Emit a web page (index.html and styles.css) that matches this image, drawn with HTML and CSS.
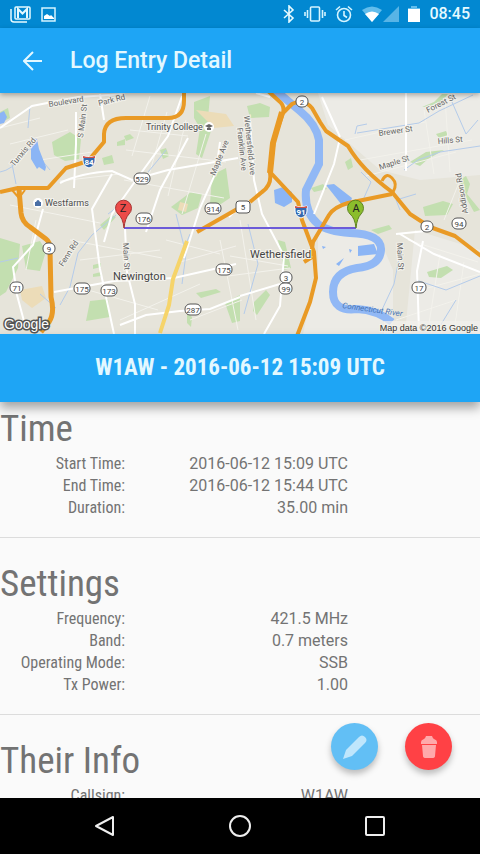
FILE: index.html
```html
<!DOCTYPE html>
<html lang="en">
<head>
  <meta charset="UTF-8" />
  <meta name="viewport" content="width=device-width, initial-scale=1" />
  <title>Log Entry Detail</title>
  <link rel="stylesheet" href="styles.css">
</head>
<body>

  <!-- System status bar -->
  <div class="status-bar">
    <div class="status-group">
      <svg width="22" height="18" viewBox="0 0 22 18" fill="none" stroke="#e6faff">
        <path d="M1 4v10q0 3 3 3h13" stroke-width="1.5"/>
        <rect x="5" y="2" width="15" height="12" rx="1" stroke-width="1.500"/>
        <path d="M8 13V4l4.500 4.500L17 4v9" stroke-width="2"/>
      </svg>
      <svg width="15" height="15" viewBox="0 0 15 15">
        <rect x="1" y="1" width="13" height="13" fill="none" stroke="#d5f4ff" stroke-width="1.500"/>
        <path d="M3 12V9l3-2 3 2 1-1 3 3v1z" fill="#fff"/>
      </svg>
    </div>
    <div class="status-group status-right">
      <svg width="12" height="18" viewBox="0 0 12 18" fill="none" stroke="#e6faff" stroke-width="1.600">
        <path d="M1 5l9 8-4 4V1l4 4-9 8"/>
      </svg>
      <svg width="22" height="18" viewBox="0 0 22 18" fill="none" stroke="#d5f4ff" stroke-width="1.600">
        <rect x="6.500" y="2" width="9" height="14" rx="1"/>
        <path d="M3.500 5v8M1 7v4M18.500 5v8M21 7v4"/>
      </svg>
      <svg width="18" height="18" viewBox="0 0 18 18" fill="none" stroke="#d5f4ff" stroke-width="1.600">
        <circle cx="9" cy="10" r="6.500"/>
        <path d="M1 5l4-3.500M17 5l-4-3.500M9 6v4.500l3 2"/>
      </svg>
      <svg class="wifi" width="20" height="16" viewBox="0 0 20 16">
        <path d="M0 4q10-7 20 0L10 16z" fill="#62bdec"/>
        <path d="M3 8q7-5 14 0l-7 8z" fill="#fff"/>
      </svg>
      <svg width="16" height="16" viewBox="0 0 16 16"><path d="M16 0v16H0z" fill="#58b4e6"/></svg>
      <svg class="battery" width="12" height="18" viewBox="0 0 12 18">
        <path d="M0 3h3V1h6v2h3v14H0z" fill="#62bdec"/>
        <path d="M0 4h12v13H0z" fill="#fff"/>
      </svg>
      <span class="clock">08:45</span>
    </div>
  </div>

  <header class="app-bar">
    <button type="button" class="back-button" aria-label="Back">
      <svg width="20" height="20" viewBox="0 0 20 20" fill="none" stroke="#e3f8ff" stroke-width="2">
        <path d="M19 10H2M10 1l-9 9 9 9"/>
      </svg>
    </button>
    <h1>Log Entry Detail</h1>
  </header>

  <main>
    <div class="map">
      <svg viewBox="0 93 480 241" role="img" aria-label="Map of both stations">
        <rect x="0" y="93" width="480" height="241" fill="#e6e4da"/>

        <!-- Open land -->
        <g fill="#ecebe6">
          <path d="M318 93h162v82l-60 5-40-10-52-45z"/>
          <path d="M318 225l60 10 15 35v64h-90l15-70z"/>
          <path d="M415 230l65 20v84h-75z"/>
        </g>

        <!-- Parks -->
        <g fill="#c3dfb0">
          <path d="M52 142l18-10 11 7-2 20-14 2-11-6z"/>
          <path d="M102 158l10-3 2 8-10 2zM117 142l8-3v6l-8 1zM124 136l6-2 4 4-8 3z"/>
          <path d="M194 102l16-6-2 22 4 10-10 30-6-4 4-26-6-10z"/>
          <path d="M212 175l14-7 4 30-12 8-8-2z"/>
          <path d="M171 207l20-15 11 2-4 14-16 7z"/>
          <path d="M0 238l20 6-2 24-12 24-6 4z"/>
          <path d="M22 246l18-5 6 10-6 20-14-2z"/>
          <path d="M90 301l18-2 2 18-24 4zM93 265l8-2v4l-8 2zM93 274l8-2v4l-8 1z"/>
          <path d="M247 106l13-3 10 4-1 10-19 1z"/>
          <path d="M311 188l12-4 4 5-13 3zM345 162l6-4 2 9-5 3z"/>
          <path d="M410 162l16-10 18-2-16 9-8 7z"/>
          <path d="M423 207l20-6 10 3-6 11-22 1zM460 180l6-4 4 8-3 10 13 16-6 2-12-22z"/>
          <path d="M427 272l20-6 6 4-12 8-12-1z"/>
          <path d="M254 302l12-12 4 5-13 20-4-4zM278 240l7 2 6 26-7 2zM371 230l18-5 3 4-14 5z"/>
          <path d="M225 303l15-8v26l-8 2zM196 293l20-4 5 3-20 6zM160 150l6-2 3 8-6 3z"/>
          <path d="M422 107l12-5 8-8h6l-10 12zM436 134l10-3 2 4-9 3zM187 313l5 4-1 10-4-4z"/>
          <path d="M100 225l12-10 4 2-12 13zM0 112l8-4 2 10-8 4z"/>
        </g>
        <path d="M20 290l22-4 4 12-14 10-10-8zM196 110l30 4 8 12-20 2zM180 202l8 2-2 8-8-2z" fill="#ecdcb8"/>

        <!-- Side streets -->
        <g fill="none" stroke="#f3f2ec" stroke-width="1">
          <path d="M0 128l40-10M10 144l58-14M40 160l52-8M60 181l60-7M130 130l58 6M126 150l100 12M150 96l-18 60M167 112l-20 70M186 120l-18 76M206 134l-24 80M124 180l100 18M10 205l90 18M36 220l-10 50M70 240l92 18M80 260l80-10M88 290l70 20M120 320l80-36M166 240l54 14M180 262l56-16M190 320l52-20M220 240l18 90M240 220l16 100M230 256l58 10M228 276l62-8M345 140l80-18M360 160l112-20M366 176l90-24M424 110l10 64M445 98l5 74M460 180l-16 40M408 240l70 22M420 290l60-16M396 320l60-20M440 254l-12 76M464 262l-10 70"/>
        </g>

        <!-- Creeks -->
        <g fill="none" stroke="#b4cbea" stroke-width="1">
          <path d="M0 172q12-2 22-16l12-10M28 128l2-22M16 184l-4-20M40 158l10 12M116 215l-24 20-14 18-8 34-10 18M176 214l10 40-4 30M108 214l16-12M355 134l2-8 10-2M357 133l62-10 20-12 34-16M400 210l-4-10 20-6M363 200l8-18-10-10M418 160l22-8 40-6M452 102l14 32 12-14M248 224l10 40-14 50M402 244l-8 40-14 30M416 280l30 10 34-14M456 300l-16 26M148 172l10-12 8-10M404 170l14-10M0 262l18-4M40 294l16 14M190 234l-8 20"/>
        </g>

        <!-- Water -->
        <g fill="#8bb5f5">
          <path d="M0 113l4-2 3 6-3 6-4 1zM31 138l6 1 2 10 7 18-1 4-6-4-2 2-6-10z"/>
          <path d="M274 190l9-3 9 5v10l-8 5-9-4zM326 185l8-1 18 14-3 8-8-2z"/>
          <path d="M358 246l16-2 4 10-20 2zM349 249l3 1-2 3zM336 264l8-6-5 8zM322 246l4 1-3 2z"/>
        </g>
        <path d="M275 90L300 111Q316 124 319 140V164L306 190Q304 212 318 224 328 232 350 233 382 234 381 250T357 268Q333 272 333 292T357 309Q377 310 392 322" fill="none" stroke="#91b8f5" stroke-width="8"/>

        <!-- Main streets -->
        <g fill="none" stroke="#fff" stroke-width="2">
          <path d="M0 128l32-22 46-9 46-3M76 112v32l-2 44M60 183q20-10 52-12l20 9 36-10 70-12M112 174l-20 35 8 60 14 65M182 96l-14 40-32 44-24 34-8 28M188 138L160 190l-14 42M220 142l-4 30-16 36-16 50M43 209l-10 36-20 22 4 28 8 30M125 228l2 44 8 32v30M54 292l60-11 60-3 62-14M120 325l26-10 34-4 30-2 30-12"/>
          <path d="M256 93l14 4M250 120l4 60 8 34 22 42-4 50-16 28M322 97l18 40M406 93v78M340 138l-6 26-20 50M400 234l34 20 46 18M423 241l-6 30 2 60M396 234l30-3M229 217l14-14M240 296l40-12M100 94l4 26"/>
        </g>
        <path d="M187 241l-14 38-4 26-9 28" fill="none" stroke="#f6d46a" stroke-width="4"/>

        <!-- Highways -->
        <g fill="none" stroke="#e99a25" stroke-width="4" stroke-linejoin="round">
          <path d="M184 93v8q0 17-16 17h-42q-21 0-22 16v8l-16 19-22 7-18 20H18l-18 4"/>
          <path d="M19 189l2 24q1 9 9 14l16 12q4 3 4 10l1 48q4 16-2 25l-8 10" stroke-width="5"/>
          <path d="M12 190l7 8 6-8" stroke-width="2"/>
          <path d="M268 91l11 10q6 5 4 12l-9 26-4 34q2 12-8 19l-12 10M283 113l9-9q11-6 20 4l8 14 6 9 22 15q14 24 44 46l18 22 20 13 25 9 26 20" stroke-width="4"/>
          <path d="M282 112l-9 31-3 30" stroke-width="6"/>
          <path d="M270 172l28 30 4 18 12 32 2 26-6 24-13 34M392 194l-44 9q-14 4-19 12l-16 27-2 14M304 262l8-5"/>
          <path d="M393 192q5-8-1-14t-10 3" stroke-width="3"/>
          <path d="M197 232l42-24"/>
        </g>

        <path d="M124 228h232" stroke="#6c5bd8" stroke-width="2"/>

        <!-- Road signs -->
        <g fill="#fff" stroke="#555" stroke-width="1">
          <rect x="134" y="173" width="16" height="11" rx="5"/>
          <rect x="205" y="203" width="16" height="11" rx="5"/>
          <rect x="136" y="213" width="16" height="11" rx="5"/>
          <rect x="236" y="201" width="14" height="12" rx="3"/>
          <rect x="43" y="243" width="12" height="11" rx="5"/>
          <rect x="10" y="282" width="13" height="11" rx="5"/>
          <rect x="74" y="283" width="16" height="11" rx="5"/>
          <rect x="101" y="285" width="16" height="11" rx="5"/>
          <rect x="216" y="264" width="16" height="11" rx="5"/>
          <rect x="185" y="304" width="16" height="11" rx="5"/>
          <rect x="296" y="96" width="12" height="11" rx="5"/>
          <rect x="421" y="221" width="12" height="11" rx="5"/>
          <rect x="452" y="218" width="14" height="11" rx="5"/>
          <rect x="412" y="282" width="14" height="11" rx="5"/>
          <rect x="280" y="272" width="12" height="11" rx="5"/>
          <rect x="279" y="283" width="13" height="11" rx="5"/>
        </g>
        <g class="sign-text">
          <text x="142" y="182">529</text>
          <text x="213" y="212">314</text>
          <text x="144" y="222">176</text>
          <text x="243" y="210">5</text>
          <text x="49" y="252">9</text>
          <text x="17" y="291">71</text>
          <text x="82" y="292">175</text>
          <text x="109" y="294">173</text>
          <text x="224" y="273">175</text>
          <text x="193" y="313">287</text>
          <text x="302" y="105">2</text>
          <text x="427" y="230">2</text>
          <text x="459" y="227">94</text>
          <text x="419" y="291">17</text>
          <text x="286" y="281">3</text>
          <text x="286" y="292">99</text>
        </g>
        <g fill="#3568ae" stroke="#fff" stroke-width="1">
          <path d="M83 156q6 2 12 0v5q0 5-6 7-6-2-6-7zM295 206q6 2 12 0v5q0 5-6 7-6-2-6-7z"/>
        </g>
        <path d="M83 156q6 2 12 0v2H83zM295 206q6 2 12 0v2h-12z" fill="#d0524b"/>
        <g class="shield-text">
          <text x="89" y="165">84</text>
          <text x="301" y="215">91</text>
        </g>

        <!-- Places -->
        <circle cx="209" cy="127" r="5" fill="#fff"/>
        <path d="M205 126l4-2 4 2-4 2zM207 128v2h4v-2z" fill="#666"/>
        <circle cx="38" cy="203" r="5" fill="#fff"/>
        <path d="M35 206v-4h6v4zM36 202q2-4 4 0z" fill="#4a6fa5"/>
        <g class="place">
          <text x="146" y="130">Trinity College</text>
          <text x="45" y="206">Westfarms</text>
        </g>
        <g class="town">
          <text x="113" y="280">Newington</text>
          <text x="250" y="258">Wethersfield</text>
        </g>

        <!-- Street names -->
        <g class="street">
          <text transform="translate(49 107) rotate(-9)">Boulevard</text>
          <text transform="translate(99 106) rotate(-14)">Park Rd</text>
          <text transform="translate(83 138) rotate(-83)">S Main St</text>
          <text transform="translate(14 167) rotate(-50)">Tunxis Rd</text>
          <text transform="translate(215 176) rotate(-68)">Maple Ave</text>
          <text transform="translate(244 116) rotate(84)">Wethersfield Ave</text>
          <text transform="translate(237 128) rotate(84)">Franklin Ave</text>
          <text transform="translate(63 267) rotate(-57)">Fenn Rd</text>
          <text transform="translate(123 243) rotate(87)">Main St</text>
          <text transform="translate(379 136) rotate(-8)">Brewer St</text>
          <text transform="translate(428 113) rotate(-27)">Forest St</text>
          <text transform="translate(438 144) rotate(-5)">Hills St</text>
          <text transform="translate(380 170) rotate(-18)">Maple St</text>
          <text transform="translate(397 243) rotate(87)">Main St</text>
          <text transform="translate(468 213) rotate(-100)">Addison Rd</text>
        </g>
        <text class="river" transform="translate(342 308) rotate(8)">Connecticut River</text>

        <!-- Station markers -->
        <path d="M124 228q-1-10-6-14a8 8 0 1 1 11 0q-4 4-5 14z" fill="#ec4b48" stroke="#a63533" stroke-width="1"/>
        <path d="M356 228q-1-10-6-14a8 8 0 1 1 11 0q-4 4-5 14z" fill="#8bbd2c" stroke="#5f8421" stroke-width="1"/>
        <g class="marker-text">
          <text x="123" y="212">Z</text>
          <text x="356" y="212">A</text>
        </g>

        <rect x="384" y="321" width="96" height="13" fill="#f2f1ec" fill-opacity="0.7"/>
        <text class="credit" x="478" y="331">Map data ©2016 Google</text>
        <text class="logo" x="4" y="329">Google</text>
      </svg>
    </div>

    <h2 class="entry-title">W1AW - 2016-06-12 15:09 UTC</h2>

    <div class="details">
      <section>
        <h3>Time</h3>
        <table>
          <tr><th scope="row">Start Time:</th><td>2016-06-12 15:09 UTC</td></tr>
          <tr><th scope="row">End Time:</th><td>2016-06-12 15:44 UTC</td></tr>
          <tr><th scope="row">Duration:</th><td>35.00 min</td></tr>
        </table>
      </section>
      <section>
        <h3>Settings</h3>
        <table>
          <tr><th scope="row">Frequency:</th><td>421.5 MHz</td></tr>
          <tr><th scope="row">Band:</th><td>0.7 meters</td></tr>
          <tr><th scope="row">Operating Mode:</th><td>SSB</td></tr>
          <tr><th scope="row">Tx Power:</th><td>1.00</td></tr>
        </table>
      </section>
      <section>
        <h3>Their Info</h3>
        <table>
          <tr><th scope="row">Callsign:</th><td>W1AW</td></tr>
        </table>
      </section>
    </div>

    <!-- Floating actions -->
    <div class="actions">
      <button type="button" class="fab fab-edit" aria-label="Edit">
        <svg width="24" height="24" viewBox="0 0 24 24" fill="#bfe6fc">
          <path d="M0 24l3-9L16 2q3-3 6 0t0 6L9 21z"/>
        </svg>
      </button>
      <button type="button" class="fab fab-delete" aria-label="Delete">
        <svg width="18" height="24" viewBox="0 0 18 24" fill="#ffa9ab">
          <path d="M1 9V7q0-2 3-3 1 0 2-3h6q1 3 2 3 3 1 3 3v2zM2 10h14l-1 11q0 2-3 2H6q-3 0-3-2z"/>
        </svg>
      </button>
    </div>
  </main>

  <!-- System navigation -->
  <nav class="nav-bar">
    <button type="button" aria-label="Back">
      <svg width="22" height="24" viewBox="0 0 22 24"><path d="M19 3v18L2 12z"/></svg>
    </button>
    <button type="button" aria-label="Home">
      <svg width="24" height="24" viewBox="0 0 24 24"><circle cx="12" cy="12" r="10"/></svg>
    </button>
    <button type="button" aria-label="Recent apps">
      <svg width="22" height="22" viewBox="0 0 22 22"><rect x="2" y="2" width="18" height="18" rx="1"/></svg>
    </button>
  </nav>

</body>
</html>
```
FILE: styles.css
```css
* {
  box-sizing: border-box;
}

body {
  margin: 0;
  height: 100vh;
  display: flex;
  flex-direction: column;
  overflow: hidden;
  background-color: #fafafa;
  color: #737373;
  font-family: Roboto, sans-serif;
}

svg {
  display: block;
}

button {
  display: flex;
  align-items: center;
  justify-content: center;
  padding: 0;
  border: none;
  background: none;
  cursor: pointer;
}

/* Status bar */
.status-bar {
  flex: none;
  height: 28px;
  padding: 0 10px;
  display: flex;
  align-items: center;
  justify-content: space-between;
  background-color: #0288d1;
}

.status-group {
  display: flex;
  align-items: center;
  gap: 9px;
}

.wifi {
  margin-right: -8px;
}

.clock {
  color: #e6faff;
  font-size: 16px;
  font-weight: 500;
  line-height: 28px;
}

/* App bar */
.app-bar {
  flex: none;
  height: 65px;
  padding: 0 23px;
  display: flex;
  align-items: center;
  gap: 27px;
  background-color: #1ea5f5;
  box-shadow: 0 2px 5px rgba(0,0,0,0.3);
  z-index: 1;
}

.app-bar h1 {
  margin: 0;
  color: #e3f8ff;
  font-size: 23px;
  font-weight: 500;
}

/* Content */
main {
  flex: 1;
  min-height: 0;
  display: flex;
  flex-direction: column;
  position: relative;
}

.map {
  flex: none;
}

.map svg {
  width: 100%;
}

.map text {
  stroke: #f3f2ec;
  stroke-width: 2px;
  paint-order: stroke;
}

.place {
  font-size: 9px;
  fill: #4c4c4c;
}

.town {
  font-size: 11px;
  fill: #444;
}

.street {
  font-size: 8px;
  fill: #666;
}

.river {
  font-size: 8px;
  font-style: italic;
  fill: #4673b4;
}

.map .river,
.map .sign-text text,
.map .shield-text text,
.map .marker-text text {
  stroke: none;
}

.sign-text {
  font-size: 8px;
  fill: #444;
  text-anchor: middle;
}

.shield-text {
  font-size: 8px;
  font-weight: bold;
  fill: #fff;
  text-anchor: middle;
}

.marker-text {
  font-size: 11px;
  fill: #222;
  text-anchor: middle;
}

.credit {
  font-family: "Liberation Sans", sans-serif;
  font-size: 9px;
  fill: #333;
  text-anchor: end;
}

.map .logo {
  font-family: "Liberation Sans", sans-serif;
  font-size: 14px;
  fill: #fff;
  stroke: #555;
  stroke-width: 3px;
}

.entry-title {
  flex: none;
  margin: 0;
  padding: 0 16px;
  background-color: #1ea5f5;
  color: #e3f8ff;
  font-family: "Roboto Condensed", "Liberation Sans Narrow", Roboto, sans-serif;
  font-size: 23px;
  font-weight: bold;
  line-height: 68px;
  text-align: center;
  box-shadow: 0 6px 10px rgba(0,0,0,0.35);
  z-index: 1;
}

.details {
  flex: 1;
  min-height: 0;
  overflow: hidden;
}

section {
  padding: 22px 0 18px;
  border-bottom: 1px solid #dcdcdc;
}

section:first-child {
  padding-top: 3px;
}

h3 {
  margin: 0;
  font-family: "Roboto Condensed", "Liberation Sans Narrow", Roboto, sans-serif;
  font-size: 37px;
  font-weight: normal;
  line-height: 48px;
}

table {
  border-collapse: collapse;
  font-size: 16px;
  line-height: 22px;
}

th,
td {
  padding: 0;
  text-align: right;
}

th {
  width: 125px;
  font-family: "Roboto Condensed", "Liberation Sans Narrow", Roboto, sans-serif;
  font-weight: normal;
}

td {
  width: 223px;
}

/* Floating buttons */
.actions {
  position: absolute;
  right: 28px;
  bottom: 28px;
  display: flex;
  gap: 27px;
  z-index: 2;
}

.fab {
  width: 47px;
  height: 47px;
  border-radius: 50%;
  box-shadow: 0 4px 6px rgba(0,0,0,0.25);
}

.fab-edit {
  background-color: #62bff5;
}

.fab-delete {
  background-color: #ff4145;
}

/* Navigation bar */
.nav-bar {
  flex: none;
  height: 56px;
  padding: 0 38px;
  display: flex;
  background-color: #000;
}

.nav-bar button {
  flex: 1;
}

.nav-bar svg {
  fill: none;
  stroke: #eee;
  stroke-width: 2px;
  stroke-linejoin: round;
}
```
